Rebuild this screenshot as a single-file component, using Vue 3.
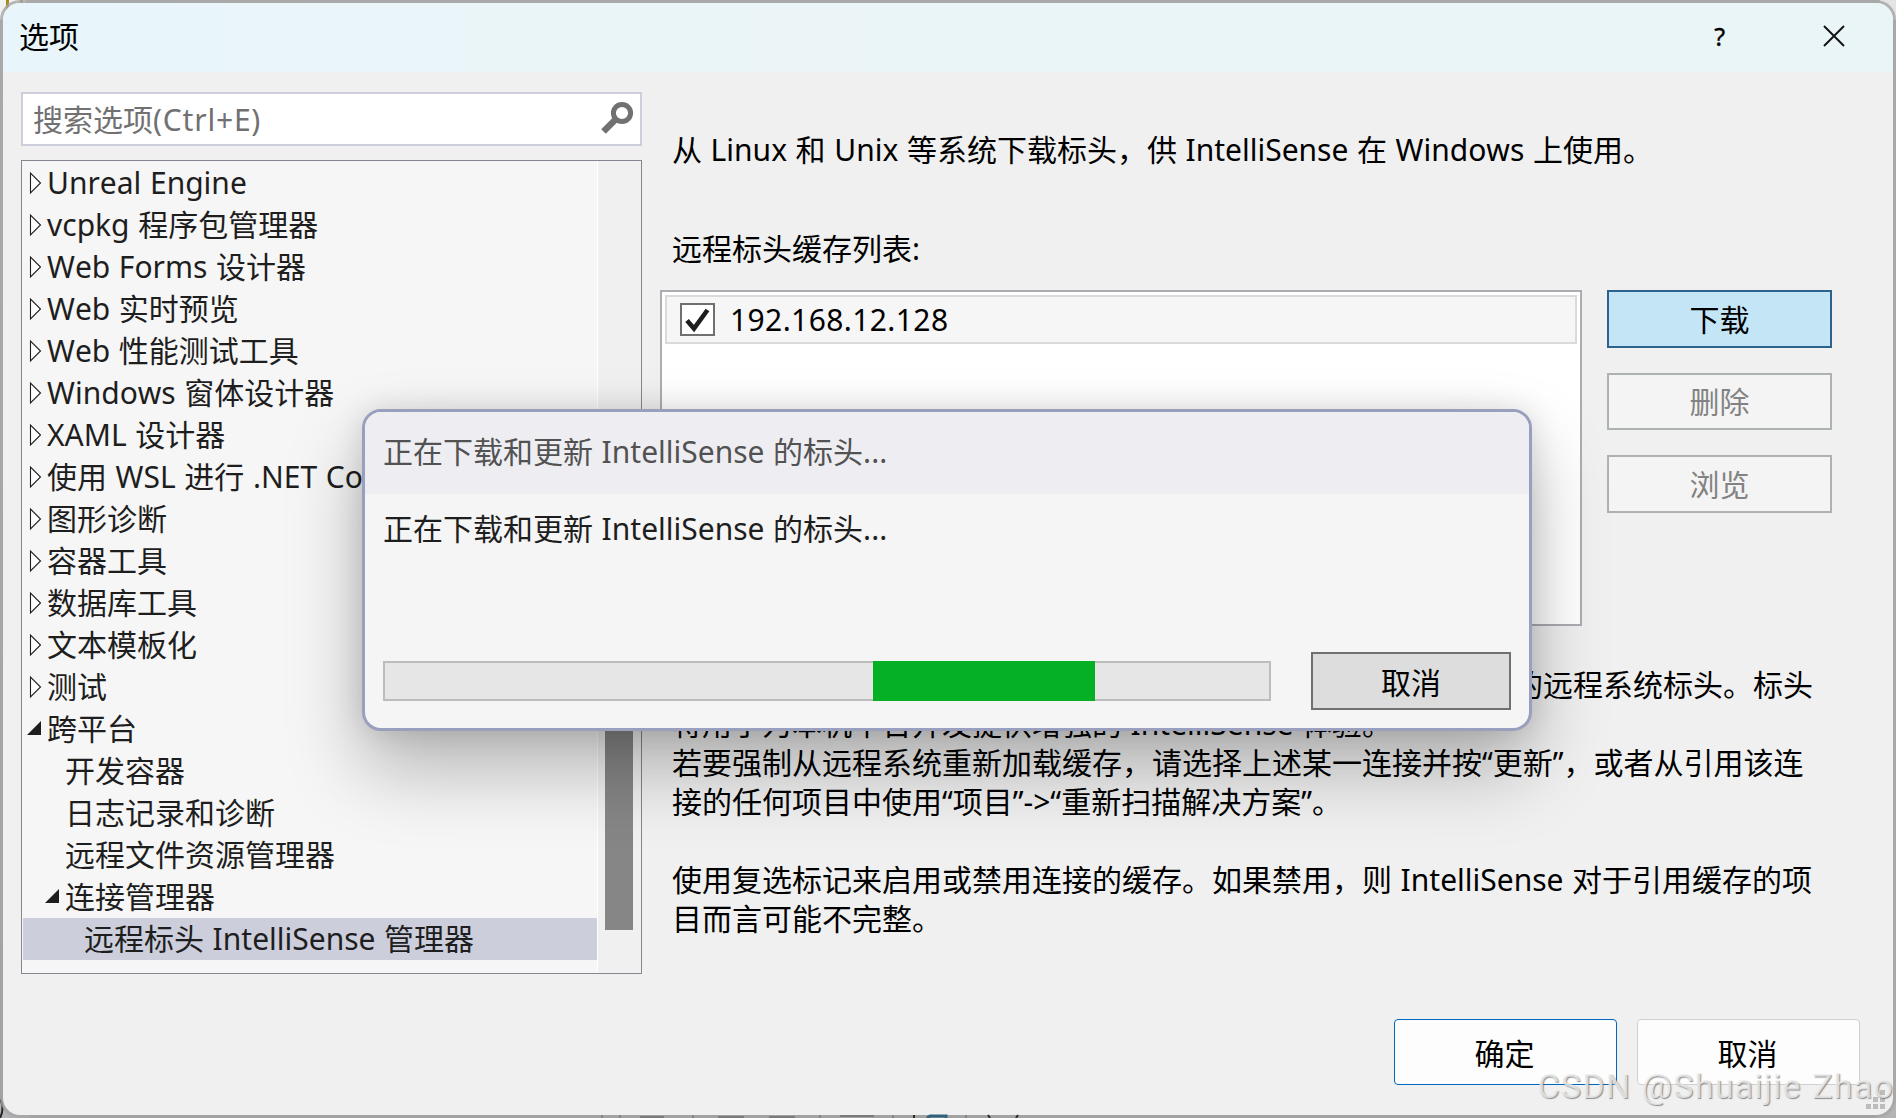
<template>
  <div class="desktop">
    <svg class="behind" width="1896" height="1118" viewBox="0 0 1896 1118">
      <rect x="0" y="0" width="26" height="20" fill="#f2f2f2" />
      <rect x="6" y="0" width="3" height="14" fill="#a88a1c" />
      <rect x="20" y="0" width="3" height="4" fill="#a88a1c" />
      <rect x="1876" y="0" width="20" height="1118" fill="#b3b3b3" />
      <rect x="1880" y="0" width="16" height="20" fill="#e4e4e4" />
      <rect x="0" y="1098" width="29" height="20" fill="#b4b4b8" />
      <path d="M0 1099q5 9 0 19" fill="none" stroke="#222" stroke-width="2" />
    </svg>

    <section class="window">
      <header class="title-bar">
        <span class="title-text">选项</span>
        <span class="help">?</span>
        <svg class="close" width="22" height="22" viewBox="0 0 22 22">
          <path d="M1 1l20 20M21 1L1 21" stroke="#111" stroke-width="1.9" fill="none" />
        </svg>
      </header>

      <div class="body">
        <aside class="side">
          <div class="search">
            <span>搜索选项<span class="shortcut">(Ctrl+E)</span></span>
            <svg width="34" height="34" viewBox="0 0 34 34">
              <circle cx="22" cy="12" r="8.6" fill="none" stroke="#717171" stroke-width="5" />
              <path d="M16 18L3.500 30.500" stroke="#717171" stroke-width="6.6" />
            </svg>
          </div>
          <div class="tree">
            <ul class="tree-list">
              <li
                v-for="node in nodes"
                :key="node.text"
                class="tree-row"
                :class="['level-' + node.level, { selected: node.selected }]"
              >
                <span class="arrow">
                  <svg v-if="node.state === 'closed'" width="20" height="24" viewBox="0 0 20 24">
                    <path d="M5.500 2v20L15.500 12z" fill="#fff" stroke="#1e1e1e" stroke-width="1.1" />
                  </svg>
                  <svg v-else-if="node.state === 'open'" width="20" height="24" viewBox="0 0 20 24">
                    <path d="M16 4v14H2z" fill="#1e1e1e" />
                  </svg>
                </span>
                <span>{{ node.text }}</span>
              </li>
            </ul>
            <div class="scroll"><div class="thumb"></div></div>
          </div>
        </aside>

        <main class="page">
          <p class="intro">从 Linux 和 Unix 等系统下载标头，供 IntelliSense 在 Windows 上使用。</p>
          <p class="label">远程标头缓存列表:</p>
          <div class="cache">
            <div class="cache-list">
              <div class="cache-item">
                <span class="check">
                  <svg width="31" height="29" viewBox="0 0 31 29">
                    <path d="M5 15.500L12 23.500L25.500 5" fill="none" stroke="#1e1e1e" stroke-width="4.6" />
                  </svg>
                </span>
                <span class="address">192.168.12.128</span>
              </div>
            </div>
            <div class="cache-actions">
              <button class="flat primary">下载</button>
              <button class="flat" disabled>删除</button>
              <button class="flat" disabled>浏览</button>
            </div>
          </div>
          <div class="notes">
            <p v-for="(line, i) in notes" :key="i">{{ line }}</p>
          </div>
        </main>
      </div>

      <footer class="footer">
        <button class="round ok">确定</button>
        <button class="round">取消</button>
      </footer>
      <svg class="grip" width="20" height="20" viewBox="0 0 20 20">
        <path
          d="M14 0h5v5h-5zM7 7h5v5h-5zM14 7h5v5h-5zM0 14h5v5h-5zM7 14h5v5h-5zM14 14h5v5h-5z"
          fill="#bdbdbd"
        />
      </svg>
    </section>

    <!-- slivers of the window underneath, along the bottom edge -->
    <svg class="behind" width="1896" height="1118" viewBox="0 0 1896 1118">
      <path d="M602 1115v3M620 1115v3M693 1115v3M820 1115v3M893 1115v3M966 1115v3" stroke="#84848c" stroke-width="2" />
      <path d="M640 1117h24M718 1117h26M769 1117h26M840 1116h34" stroke="#7a7a7a" stroke-width="2" />
      <path d="M927 1118l3-2h16v2" fill="none" stroke="#33627f" stroke-width="3" />
      <path d="M914 1115v3M988 1115l2 3M1018 1115l-2 3" stroke="#2b2b2b" stroke-width="2" />
    </svg>

    <section class="progress-dialog">
      <header class="dialog-title">{{ message }}</header>
      <p class="dialog-text">{{ message }}</p>
      <div class="dialog-row">
        <div class="track">
          <div class="chunk" :style="{ marginLeft: chunk.start + 'px', width: chunk.width + 'px' }"></div>
        </div>
        <button class="dialog-cancel">取消</button>
      </div>
    </section>

    <div class="watermark">CSDN @Shuaijie Zhao</div>
  </div>
</template>

<script setup>
const message = '正在下载和更新 IntelliSense 的标头...'

const chunk = { start: 490, width: 222 }

const nodes = [
  { text: 'Unreal Engine', level: 1, state: 'closed' },
  { text: 'vcpkg 程序包管理器', level: 1, state: 'closed' },
  { text: 'Web Forms 设计器', level: 1, state: 'closed' },
  { text: 'Web 实时预览', level: 1, state: 'closed' },
  { text: 'Web 性能测试工具', level: 1, state: 'closed' },
  { text: 'Windows 窗体设计器', level: 1, state: 'closed' },
  { text: 'XAML 设计器', level: 1, state: 'closed' },
  { text: '使用 WSL 进行 .NET Core 调试', level: 1, state: 'closed' },
  { text: '图形诊断', level: 1, state: 'closed' },
  { text: '容器工具', level: 1, state: 'closed' },
  { text: '数据库工具', level: 1, state: 'closed' },
  { text: '文本模板化', level: 1, state: 'closed' },
  { text: '测试', level: 1, state: 'closed' },
  { text: '跨平台', level: 1, state: 'open' },
  { text: '开发容器', level: 2 },
  { text: '日志记录和诊断', level: 2 },
  { text: '远程文件资源管理器', level: 2 },
  { text: '连接管理器', level: 2, state: 'open' },
  { text: '远程标头 IntelliSense 管理器', level: 3, selected: true }
]

const notes = [
  '远程标头缓存包含从已启用的连接中下载的远程系统标头。标头',
  '将用于为本机平台开发提供增强的 IntelliSense 体验。',
  '若要强制从远程系统重新加载缓存，请选择上述某一连接并按“更新”，或者从引用该连',
  '接的任何项目中使用“项目”->“重新扫描解决方案”。',
  '',
  '使用复选标记来启用或禁用连接的缓存。如果禁用，则 IntelliSense 对于引用缓存的项',
  '目而言可能不完整。'
]
</script>

<style>
body {
  margin: 0;
  overflow: hidden;
}
</style>

<style scoped>
.desktop {
  position: relative;
  box-sizing: border-box;
  width: 1896px;
  height: 1118px;
  padding: 3px;
  overflow: hidden;
  background: linear-gradient(180deg, #b9b9b9 0%, #ababab 50%, #989898 100%);
  font-family: 'Noto Sans', 'Noto Sans CJK SC', sans-serif;
  font-size: 30px;
  font-kerning: none;
  word-spacing: 0.8px;
  color: #000;
}

p,
ul {
  margin: 0;
  padding: 0;
  list-style: none;
}

button {
  box-sizing: border-box;
  padding: 0;
  font: inherit;
  color: #000;
}

.behind {
  position: absolute;
  left: 0;
  top: 0;
}

.window {
  position: relative;
  display: flex;
  flex-direction: column;
  width: 1890px;
  height: 1112px;
  border-radius: 17px;
  background: #f0f0f0;
  box-shadow: 0 0 0 3px rgba(165, 165, 165, 0.8);
  overflow: hidden;
}

.title-bar {
  display: flex;
  align-items: center;
  height: 69px;
  flex: none;
  box-sizing: border-box;
  padding: 0 48px 3px 16px;
  background: linear-gradient(90deg, #e8f5fa 0%, #ebf5f8 40%, #eaf5f8 100%);
}

.title-text {
  flex: 1;
  padding-bottom: 3px;
}

.help {
  font-size: 25px;
  -webkit-text-stroke: 0.4px #000;
  margin-right: 98px;
}

.body {
  display: flex;
  height: 904px;
  padding: 20px 0 0 18px;
  box-sizing: border-box;
}

.side {
  width: 621px;
  flex: none;
}

.search {
  display: flex;
  align-items: center;
  justify-content: space-between;
  box-sizing: border-box;
  height: 54px;
  padding: 0 6px 2px 10px;
  border: 2px solid #cccedb;
  background: #fff;
  color: #717171;
}

.shortcut {
  letter-spacing: 0.8px;
}

.tree {
  display: flex;
  box-sizing: border-box;
  height: 814px;
  margin-top: 14px;
  border: 1px solid #828790;
  background: #f6f6f6;
}

.tree-list {
  width: 575px;
  padding-top: 1px;
}

.tree-row {
  display: flex;
  align-items: center;
  height: 42px;
  margin-left: 1px;
  line-height: 42px;
  white-space: nowrap;
  color: #1e1e1e;
}

.arrow {
  display: flex;
  width: 22px;
  flex: none;
}

.level-1 {
  padding-left: 2px;
}

.level-2 {
  padding-left: 20px;
}

.level-3 {
  padding-left: 39px;
}

.selected {
  background: #cccedb;
}

.scroll {
  flex: 1;
  border-left: 1px solid #fff;
  background: #f0f0f0;
}

.thumb {
  width: 28px;
  height: 360px;
  margin: 409px 0 0 7px;
  background: #868686;
}

.page {
  margin-left: 18px;
}

.intro {
  height: 40px;
  margin: 38px 0 0 12px;
  line-height: 40px;
  white-space: nowrap;
}

.label {
  height: 40px;
  margin: 59px 0 0 12px;
  line-height: 40px;
}

.cache {
  display: flex;
  margin-top: 21px;
  gap: 25px;
}

.cache-list {
  box-sizing: border-box;
  width: 922px;
  height: 336px;
  padding: 3px;
  border: 2px solid #abadb3;
  background: #fff;
}

.cache-item {
  display: flex;
  align-items: center;
  box-sizing: border-box;
  height: 49px;
  gap: 15px;
  padding-left: 13px;
  border: 2px solid #dadada;
  background: #f6f6f6;
}

.check {
  display: flex;
  width: 31px;
  height: 29px;
  border: 2px solid #707070;
  background: #fff;
}

.address {
  letter-spacing: 0.4px;
}

.cache-actions {
  display: flex;
  flex-direction: column;
  gap: 25px;
}

.flat {
  width: 225px;
  height: 57.500px;
  padding-bottom: 2px;
  border: 2px solid #adb2b5;
  background: #f4f4f4;
  color: #838383;
}

.primary {
  border-color: #2c628b;
  background: #c4e5f6;
  color: #000;
}

.notes {
  margin: 39px 0 0 12px;
  line-height: 39px;
  white-space: nowrap;
}

.notes p {
  height: 39px;
}

/* first line is right-aligned with the wrapped paragraph edge */
.notes p:first-child {
  width: 1141px;
  display: flex;
  justify-content: flex-end;
}

.footer {
  display: flex;
  justify-content: flex-end;
  gap: 20px;
  margin-top: 43px;
  padding-right: 33px;
}

.round {
  width: 223px;
  height: 66px;
  padding-right: 2px;
  border: 1px solid #d0d0d0;
  border-radius: 4px;
  background: #fdfdfd;
}

.ok {
  border-color: #0067c0;
}

.grip {
  position: absolute;
  right: 7px;
  bottom: 5px;
}

.progress-dialog {
  position: absolute;
  left: 362px;
  top: 409px;
  box-sizing: border-box;
  width: 1170px;
  height: 322px;
  border: 3px solid #9b9fbe;
  border-radius: 19px;
  background: #f5f5f5;
  box-shadow: 0 38px 76px rgba(0, 0, 0, 0.27), 0 0 30px rgba(0, 0, 0, 0.12);
  overflow: hidden;
}

.dialog-title {
  height: 82px;
  padding-left: 18px;
  background: #eeeef2;
  line-height: 80px;
  color: #525252;
}

.dialog-text {
  height: 40px;
  margin-top: 15px;
  padding-left: 18px;
  line-height: 40px;
  color: #1e1e1e;
}

.dialog-row {
  display: flex;
  align-items: center;
  justify-content: space-between;
  margin: 103px 18px 0 18px;
}

.track {
  box-sizing: border-box;
  width: 888px;
  height: 40px;
  background: #e6e6e6;
  box-shadow: inset 0 0 0 2px #bcbcbc;
}

.chunk {
  height: 40px;
  background: #06b025;
}

.dialog-cancel {
  width: 200px;
  height: 58px;
  padding-bottom: 1px;
  border: 2px solid #707070;
  background: #ddd;
}

.watermark {
  position: absolute;
  right: 2px;
  top: 1066px;
  font-family: Roboto, sans-serif;
  font-size: 34px;
  line-height: 40px;
  letter-spacing: 1.2px;
  white-space: nowrap;
  color: rgba(240, 240, 240, 0.8);
  text-shadow: 1px 1px 1px rgba(100, 100, 100, 0.7);
}
</style>
